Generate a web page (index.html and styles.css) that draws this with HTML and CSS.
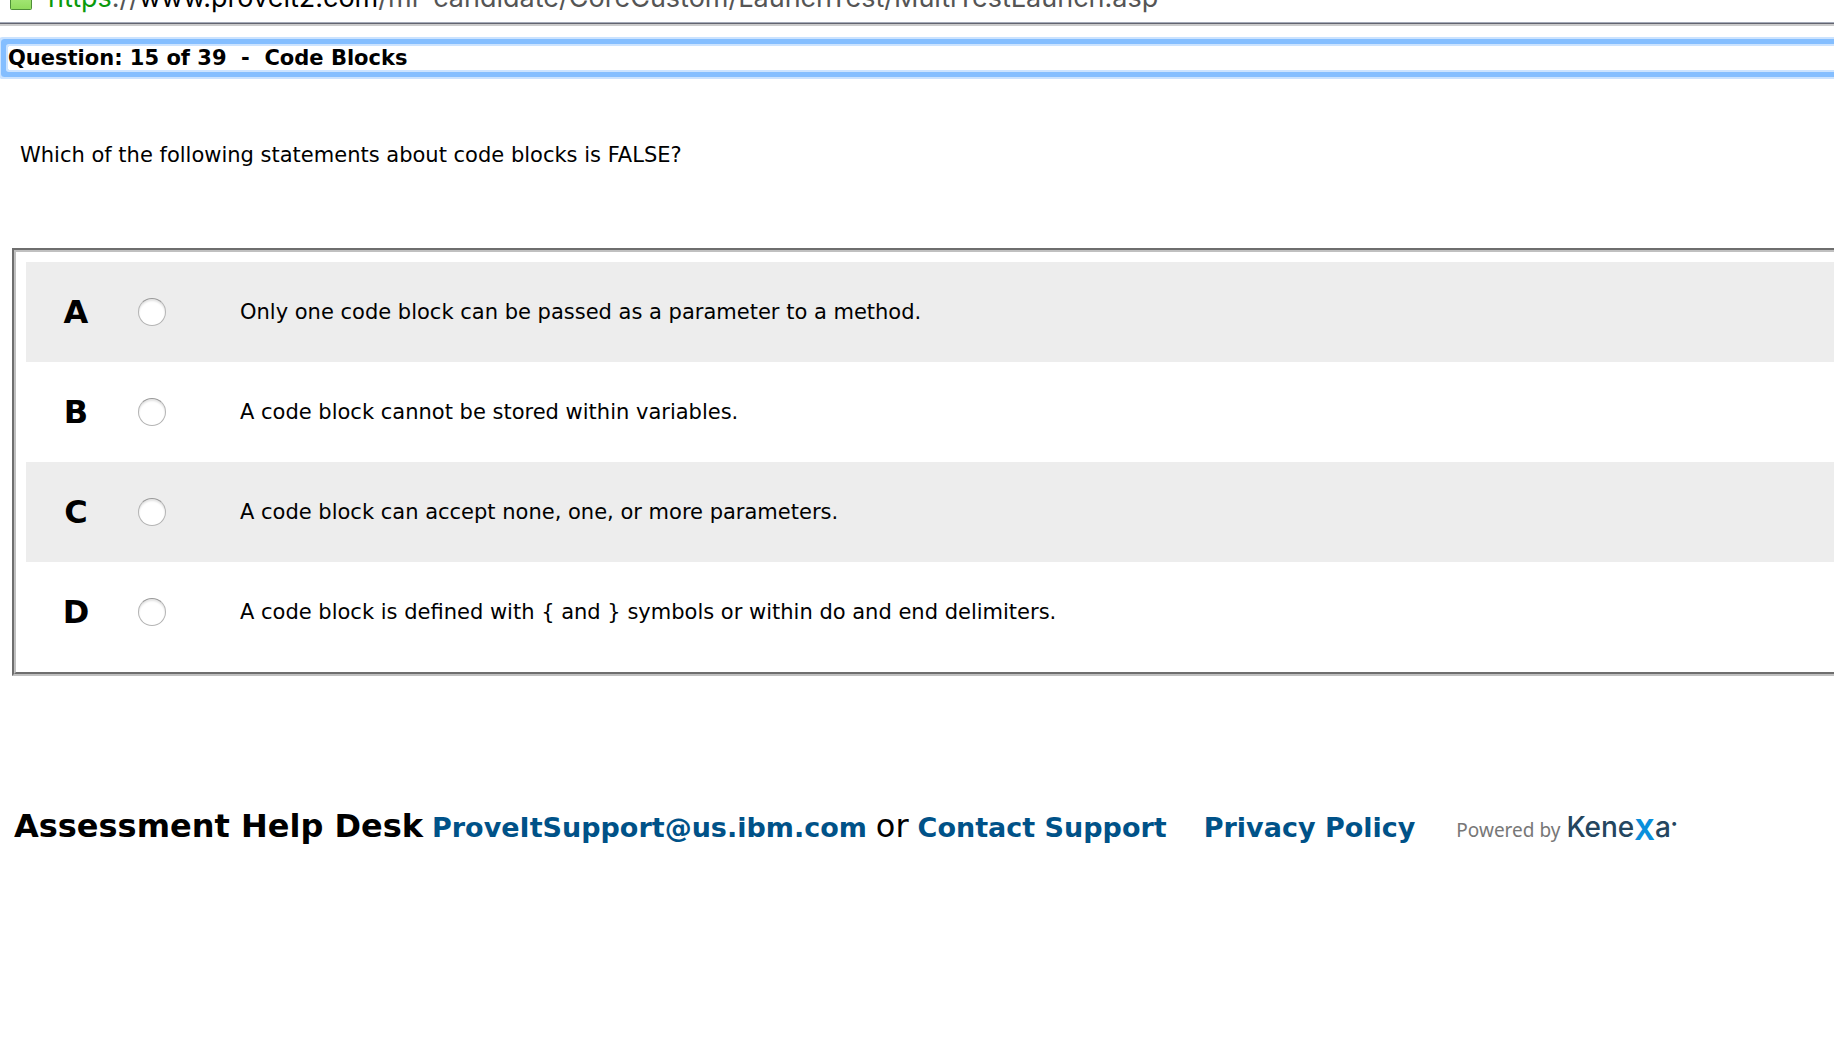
FILE: index.html
```html
<!DOCTYPE html>
<html lang="en">
<head>
<meta charset="utf-8">
<title>Question 15 of 39 - Code Blocks</title>
<link rel="stylesheet" href="styles.css">
</head>
<body>
<header class="address-bar">
  <svg class="lock" viewBox="0 0 22 26" aria-hidden="true">
    <defs><linearGradient id="lock-fill" x1="0" y1="0" x2="0" y2="1"><stop offset="0" stop-color="#b4ee8a"/><stop offset="1" stop-color="#8fdb5c"/></linearGradient></defs>
    <rect x="0.500" y="5.500" width="21" height="20" rx="1" fill="url(#lock-fill)" stroke="#4f8f38"/>
  </svg>
  <div class="url"><span class="scheme">https</span>://<span class="host">www.proveit2.com</span>/mr-candidate/CoreCustom/LaunchTest/MultiTestLaunch.asp</div>
</header>
<main>
  <h1 class="title" tabindex="-1">Question: 15 of 39 &nbsp;-&nbsp; Code Blocks</h1>
  <p class="question" id="question">Which of the following statements about code blocks is FALSE?</p>
  <form class="answers" role="radiogroup" aria-labelledby="question">
    <div class="answer-list">
      <label class="answer"><b class="letter">A</b><input class="radio" type="radio" name="answer"><span>Only one code block can be passed as a parameter to a method.</span></label>
      <label class="answer"><b class="letter">B</b><input class="radio" type="radio" name="answer"><span>A code block cannot be stored within variables.</span></label>
      <label class="answer"><b class="letter">C</b><input class="radio" type="radio" name="answer"><span>A code block can accept none, one, or more parameters.</span></label>
      <label class="answer"><b class="letter">D</b><input class="radio" type="radio" name="answer"><span>A code block is defined with { and } symbols or within do and end delimiters.</span></label>
    </div>
  </form>
</main>
<footer class="footer">
  <b class="help">Assessment Help Desk</b>
  <a class="link" href="#email">ProveItSupport@us.ibm.com</a>
  <span class="or">or</span>
  <a class="link" href="#contact">Contact Support</a>
  <a class="link privacy" href="#privacy">Privacy Policy</a>
  <span class="logo"><span class="powered">Powered by</span><span class="brand">Kene<b class="brand-x">X</b>a<span class="mark">•</span></span></span>
</footer>
</body>
</html>
```
FILE: styles.css
```css
* { box-sizing: border-box; }
body {
  margin: 0;
  background: #fff;
  color: #000;
  font-family: Verdana, "DejaVu Sans", sans-serif;
  font-size: 21px;
  overflow-x: hidden;
}
.address-bar {
  display: flex;
  align-items: flex-end;
  gap: 16px;
  height: 26px;
  padding: 0 10px 14px;
  border-bottom: 2px solid #cbcbcb;
  box-shadow: inset 0 -1px #62646f, inset 0 -2px #a4aab8;
  color: #555;
  font-family: Inter, sans-serif;
  font-size: 27px;
  line-height: 24px;
  white-space: nowrap;
}
.lock { flex: none; width: 22px; height: 26px; }
.scheme { color: #0b9a0b; }
.host { color: #000; }
.title {
  margin: 20px -20px 0 8px;
  border-radius: 1px;
  box-shadow: 0 0 0 2px #cbe3ff, 0 0 0 7px #84beff, 0 0 0 9px #cbe3ff;
  font-size: 21px;
  line-height: 24px;
}
.question { margin: 72px 20px 80px; line-height: 26px; }
.answers {
  margin: 0 -20px 0 12px;
  border: 2px solid #6e6e6e;
  border-bottom-color: #c0c0c0;
}
.answer-list {
  padding: 10px;
  border: 2px solid #c0c0c0;
  border-bottom-color: #6e6e6e;
}
.answer {
  display: grid;
  grid-template-columns: 100px 52px 1fr;
  align-items: center;
  min-height: 100px;
}
.answer:nth-child(odd) { background: #ededed; }
.letter { text-align: center; font-size: 32px; }
.radio {
  appearance: none;
  justify-self: center;
  width: 28px;
  height: 28px;
  margin: 0;
  border: 1px solid #b4b4b4;
  border-top-color: #999;
  border-radius: 50%;
  background: #fff;
  box-shadow: inset 0 2px 2px #e4e4e4;
}
.radio:checked { background: radial-gradient(circle, #333 5px, #fff 6px); }
.answer span { padding-left: 62px; }
.footer {
  display: flex;
  align-items: baseline;
  gap: 9px;
  margin-top: 130px;
  padding: 0 14px;
  line-height: 40px;
  white-space: nowrap;
}
.help { font-size: 32px; }
.link { color: #005288; font-size: 27px; font-weight: bold; text-decoration: none; }
.or { font-size: 32px; }
.privacy { margin: 0 32px 0 28px; }
.logo { display: flex; align-items: baseline; gap: 6px; }
.powered { color: #777; font-family: "Noto Sans", sans-serif; font-size: 19px; }
.brand { color: #24465f; font-family: Inter, sans-serif; font-size: 28px; font-weight: 500; }
.brand-x { color: #0a8fdc; vertical-align: -3px; line-height: 1; }
.mark { font-size: 12px; vertical-align: 10px; line-height: 1; }
```
